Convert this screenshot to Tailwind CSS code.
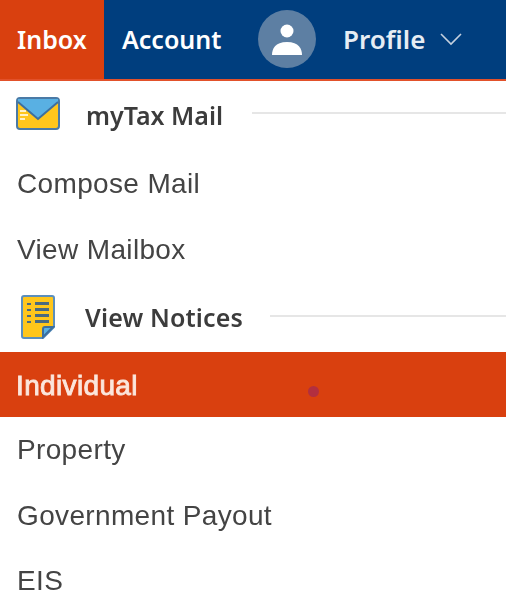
<!DOCTYPE html>
<html lang="en">
<head>
    <meta charset="UTF-8">
    <title>Inbox menu</title>
    <script src="https://cdn.jsdelivr.net/npm/@tailwindcss/browser@4"></script>
</head>
<body class="bg-white overflow-hidden font-['Liberation_Sans',sans-serif]">
    <div class="relative w-[506px] h-[605px] overflow-hidden blur-[0.5px]">

        <!-- Top nav -->
        <nav class="flex items-stretch h-[81px] bg-[#003e7e] border-b-2 border-[#e2512a] text-white font-['Noto_Sans',sans-serif] font-semibold text-[25px]">
            <a class="flex items-center bg-[#d9400f] w-[104px] pl-[17px]">Inbox</a>
            <a class="flex items-center pl-[18px] w-[154px]">Account</a>
            <span class="flex items-center justify-center w-[58px] h-[58px] mt-[10px] rounded-full bg-[#5d7fa3]">
                <svg width="34" height="34" viewBox="0 0 34 34" fill="#fff">
                    <circle cx="17" cy="9" r="6.5"></circle>
                    <path d="M2 33c0-6 3-13 15-13s15 7 15 13z"></path>
                </svg>
            </span>
            <a class="flex items-center pl-[27px] text-[#e6edf4] text-[26px]">Profile</a>
            <span class="flex items-center pl-[15px]">
                <svg width="22" height="15" viewBox="0 0 22 15" fill="none" stroke="#c4d0de" stroke-width="1.6">
                    <path d="M1 2l10 10L21 2"></path>
                </svg>
            </span>
        </nav>

        <!-- Mail section -->
        <div class="flex items-center h-[68px] pl-[16px]">
            <svg width="44" height="33" viewBox="0 0 44 33" class="shrink-0 -mt-[3px]">
                <rect x="1" y="1" width="42" height="31" rx="3" fill="#ffc61b" stroke="#4a7aa6" stroke-width="2"></rect>
                <path d="M2 2h40v3L22 22 2 5z" fill="#59b0e3"></path>
                <path d="M2 5l20 17L42 5" fill="none" stroke="#3d6f9e" stroke-width="2"></path>
                <path d="M4 14h6M4 18h8M4 22h5" stroke="#fff" stroke-width="1.5"></path>
            </svg>
            <span class="ml-[26px] font-['Noto_Sans',sans-serif] font-semibold text-[25px] text-[#3c3c3c] whitespace-nowrap mt-[2px]">myTax Mail</span>
            <span class="flex-1 h-[2px] bg-[#e6e6e6] ml-[29px] -mt-[4px]"></span>
        </div>
        <a class="flex items-center h-[66px] pl-[17px] pt-[3px] text-[28px] tracking-[0.35px] text-[#444]">Compose Mail</a>
        <a class="flex items-center h-[66px] pl-[17px] pt-[3px] text-[28px] tracking-[0.35px] text-[#444]">View Mailbox</a>

        <!-- Notices section -->
        <div class="flex items-center h-[71px] pl-[21px]">
            <svg width="34" height="44" viewBox="0 0 34 44" class="shrink-0">
                <path d="M3 1h28a2 2 0 0 1 2 2v29L22 43H3a2 2 0 0 1-2-2V3a2 2 0 0 1 2-2z" fill="#ffc61b" stroke="#5b8fbd" stroke-width="2"></path>
                <path d="M22 42V34a2 2 0 0 1 2-2h8z" fill="#59b0e3" stroke="#3d6f9e" stroke-width="2"></path>
                <g fill="#4a6a80">
                    <rect x="6" y="8" width="4" height="2"></rect><rect x="14" y="7" width="14" height="3"></rect>
                    <rect x="6" y="14" width="4" height="2"></rect><rect x="14" y="13" width="14" height="3"></rect>
                    <rect x="6" y="20" width="4" height="2"></rect><rect x="14" y="19" width="14" height="3"></rect>
                    <rect x="6" y="26" width="4" height="2"></rect><rect x="14" y="25" width="14" height="3"></rect>
                </g>
            </svg>
            <span class="ml-[30px] font-['Noto_Sans',sans-serif] font-semibold text-[25px] tracking-[0.15px] text-[#3c3c3c] whitespace-nowrap mt-[2px]">View Notices</span>
            <span class="flex-1 h-[2px] bg-[#e6e6e6] ml-[27px] -mt-[2px]"></span>
        </div>

        <!-- Notice types -->
        <a class="flex items-center h-[65px] pl-[16px] pt-[3px] bg-[#d9400f] text-[28px] tracking-[0.35px] text-[#fbe6dc] [-webkit-text-stroke:0.9px_#fbe6dc]">Individual</a>
        <a class="flex items-center h-[66px] pl-[17px] text-[28px] tracking-[0.35px] text-[#444]">Property</a>
        <a class="flex items-center h-[65px] pl-[17px] pt-[1px] text-[28px] tracking-[0.35px] text-[#444]">Government Payout</a>
        <a class="flex items-center h-[65px] pl-[17px] text-[28px] tracking-[0.35px] text-[#444]">EIS</a>

        <!-- cursor dot -->
        <span class="absolute left-[308px] top-[386px] w-[11px] h-[11px] rounded-full bg-[#b22f3f]"></span>
    </div>
</body>
</html>
